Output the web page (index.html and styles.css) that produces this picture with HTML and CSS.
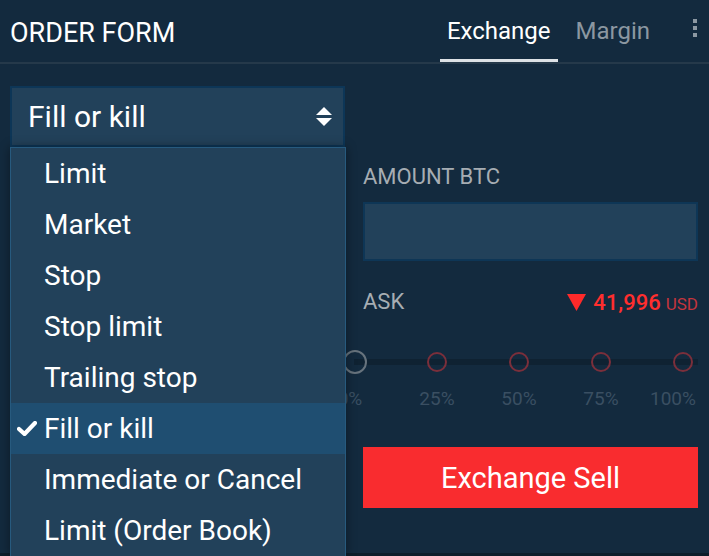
FILE: index.html
```html
<!DOCTYPE html>
<html lang="en">

<head>
    <meta charset="UTF-8">
    <meta name="viewport" content="width=device-width, initial-scale=1.0">
    <title>Order Form</title>
    <link rel="stylesheet" href="styles.css">
</head>

<body>
    <div class="panel">
        <header class="panel-head">
            <h1 class="panel-title">ORDER FORM</h1>
            <nav class="tabs">
                <a class="tab active">Exchange</a>
                <a class="tab">Margin</a>
                <span class="kebab"><i></i><i></i><i></i></span>
            </nav>
        </header>

        <section class="form">
            <div class="form-row">
                <div class="col select-wrap">
                    <div class="select">
                        <span>Fill or kill</span>
                        <svg class="arrows" width="16" height="20" viewBox="0 0 16 20">
                            <path d="M8 0 L16 8 L0 8 Z" fill="#fff" />
                            <path d="M0 11 L16 11 L8 19 Z" fill="#fff" />
                        </svg>
                    </div>
                    <ul class="dropdown">
                        <li>Limit</li>
                        <li>Market</li>
                        <li>Stop</li>
                        <li>Stop limit</li>
                        <li>Trailing stop</li>
                        <li class="selected">
                            <svg class="check" width="20" height="15" viewBox="0 0 20 15">
                                <path d="M2 8 L7.5 13 L18 2" fill="none" stroke="#fff" stroke-width="4.2" stroke-linecap="round" stroke-linejoin="round" />
                            </svg>
                            Fill or kill
                        </li>
                        <li>Immediate or Cancel</li>
                        <li>Limit (Order Book)</li>
                    </ul>
                </div>
                <div class="col"></div>
            </div>

            <div class="form-row">
                <!-- price field sits under the open menu -->
                <div class="col"></div>
                <div class="col">
                    <label class="field-label">AMOUNT BTC</label>
                    <div class="input"></div>
                </div>
            </div>

            <div class="form-row quote-row">
                <div class="col"></div>
                <div class="col quote">
                    <span class="field-label">ASK</span>
                    <span class="price">
                        <svg width="19" height="17" viewBox="0 0 19 17">
                            <path d="M0 0 L19 0 L9.5 17 Z" fill="#ff2a2a" />
                        </svg>
                        <b>41,996</b>
                        <small>USD</small>
                    </span>
                </div>
            </div>

            <div class="slider">
                <div class="track"></div>
                <div class="tick first"><span class="dot"></span><span class="pct">0%</span></div>
                <div class="tick"><span class="dot"></span><span class="pct">25%</span></div>
                <div class="tick"><span class="dot"></span><span class="pct">50%</span></div>
                <div class="tick"><span class="dot"></span><span class="pct">75%</span></div>
                <div class="tick last"><span class="dot"></span><span class="pct">100%</span></div>
            </div>

            <div class="form-row actions">
                <div class="col"></div>
                <div class="col"><button class="button sell" type="button">Exchange Sell</button></div>
            </div>
        </section>
    </div>
</body>

</html>
```

FILE: styles.css
```css
* {
    box-sizing: border-box;
}

body {
    margin: 0;
    height: 556px;
    overflow: hidden;
    background-color: #0d1e2b;
    font-family: Roboto, "Liberation Sans", sans-serif;
    color: #fff;
}

.panel {
    height: 553px;
    background-color: #132a3e;
}

.panel-head {
    display: flex;
    justify-content: space-between;
    align-items: stretch;
    height: 64px;
    padding: 0 10px;
    border-bottom: 2px solid #25394a;
}

.panel-title {
    margin: 0;
    font-size: 27px;
    font-weight: 400;
    line-height: 64px;
    padding-top: 1px;
}

.tabs {
    display: flex;
    align-items: stretch;
    gap: 11px;
    margin-bottom: -2px;
}

.tab {
    display: flex;
    align-items: center;
    padding: 0 7px 0;
    font-size: 24px;
    color: #8b97a1;
    border-bottom: 3px solid transparent;
}

.tab.active {
    color: #fff;
    border-bottom-color: #dde2e6;
    margin-bottom: 2px;
    padding-top: 2px;
}

.kebab {
    display: flex;
    flex-direction: column;
    gap: 3px;
    padding: 19px 2px 0 25px;
}

.kebab i {
    width: 4px;
    height: 4px;
    background-color: #8c98a2;
}

.form {
    padding: 22px 10px 0;
}

.form-row {
    display: flex;
    gap: 18px;
}

.col {
    width: 335px;
    flex-shrink: 0;
}

/* select + open menu */
.select-wrap {
    position: relative;
    z-index: 2;
}

.select {
    display: flex;
    justify-content: space-between;
    align-items: center;
    height: 61px;
    padding: 0 11px 0 16px;
    background-color: #22415a;
    border: 2px solid #0d3657;
    font-size: 30px;
}

.dropdown {
    position: absolute;
    top: 61px;
    left: 0;
    width: 336px;
    margin: 0;
    padding: 0;
    list-style: none;
    background-color: #22415a;
    border: 1px solid #275a7e;
    border-bottom: none;
    box-shadow: 0 0 10px rgba(0, 0, 0, 0.4);
}

.dropdown li {
    position: relative;
    height: 51px;
    line-height: 51px;
    padding-left: 33px;
    font-size: 28px;
}

.dropdown li.selected {
    background-color: #1f4e71;
}

.check {
    position: absolute;
    left: 6px;
    top: 18px;
}

/* fields */
.field-label {
    display: block;
    font-size: 22px;
    color: #a6adb3;
    line-height: 26px;
}

.form-row:nth-child(2) {
    padding-top: 17px;
}

.input {
    height: 59px;
    margin-top: 12px;
    background-color: #22415a;
    border: 2px solid #0e3656;
}

.quote-row {
    padding-top: 28px;
}

.quote {
    display: flex;
    justify-content: space-between;
    align-items: center;
}

.price {
    display: flex;
    align-items: center;
    gap: 7px;
    color: #ff2e2e;
}

.price b {
    font-size: 22px;
    font-weight: 500;
}

.price small {
    font-size: 17px;
    color: #c4353d;
    margin-left: -2px;
    padding-top: 3px;
}

/* percentage slider */
.slider {
    position: relative;
    display: flex;
    margin: 36px 0 0 304px;
}

.track {
    position: absolute;
    left: 40px;
    width: 344px;
    top: 8px;
    height: 6px;
    background-color: #0f2232;
}

.tick {
    position: relative;
    display: flex;
    flex-direction: column;
    align-items: center;
    width: 82px;
    flex-shrink: 0;
}

.dot {
    position: relative;
    width: 20px;
    height: 20px;
    margin-top: 1px;
    border-radius: 50%;
    border: 2px solid #7b2f3b;
}

.tick.first .dot {
    width: 24px;
    height: 24px;
    margin-top: -1px;
    border-color: #67737d;
}

.pct {
    margin-top: 15px;
    font-size: 19px;
    color: #3a4f62;
}

.tick.first .pct {
    margin-top: 13px;
    margin-left: -10px;
}

.tick.last .pct {
    margin-left: -20px;
}

/* buttons */
.actions {
    padding-top: 37px;
}

.button {
    width: 100%;
    height: 61px;
    border: none;
    font-family: inherit;
    font-size: 29px;
    font-weight: 400;
    color: #fff;
    cursor: pointer;
}

.sell {
    background-color: #f92c2f;
}
```
